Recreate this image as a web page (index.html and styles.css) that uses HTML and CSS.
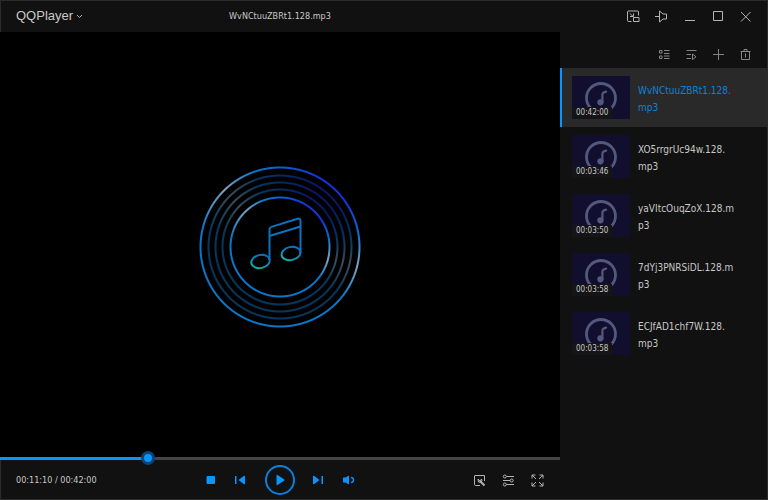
FILE: index.html
```
<!DOCTYPE html>
<html lang="en">
	<head>
		<meta charset="UTF-8">
		<title>QQPlayer</title>
		<link rel="stylesheet" href="styles.css">
	</head>
	<body>
		<!-- shared thumbnail drawing -->
		<svg class="defs" width="0" height="0">
			<symbol id="disc" viewBox="0 0 58 43">
				<circle cx="29" cy="22" r="14.5" fill="none" stroke="#53587f" stroke-width="2.8"/>
				<path d="M30.4 26V18.500q0-1.600 1.500-2.100l2.200-.8" fill="none" stroke="#53587f" stroke-width="2.2" stroke-linecap="round"/>
				<circle cx="28.4" cy="26.3" r="3.1" fill="#53587f"/>
			</symbol>
		</svg>
		<div class="player">
			<header class="titlebar">
				<button class="brand">QQPlayer
					<svg width="7" height="5" viewBox="0 0 7 5"><path d="M1 1l2.500 2.500L6 1"/></svg>
				</button>
				<h1 class="title">WvNCtuuZBRt1.128.mp3</h1>
				<div class="window-buttons">
					<button aria-label="Mini mode"><svg width="13" height="13" viewBox="0 0 13 13"><path d="M4.500 11.500H1.500q-1 0-1-1V2q0-1 1-1h9q1 0 1 1v3.500M3 3.500l3 3M6.500 3.500v3H3M6.500 7.500h5.500v4H6.500z"/></svg></button>
					<button aria-label="Pin"><svg width="13" height="13" viewBox="0 0 13 13"><path d="M0 6.500h4.500M4.500 1v11L8 9h3.500V4H8L4.500 1"/></svg></button>
					<button aria-label="Minimize"><svg width="13" height="13" viewBox="0 0 13 13"><path d="M2 10.500h10"/></svg></button>
					<button aria-label="Maximize"><svg width="13" height="13" viewBox="0 0 13 13"><path d="M2.500 1.500h9v9h-9z"/></svg></button>
					<button aria-label="Close"><svg width="13" height="13" viewBox="0 0 13 13"><path d="M2 2l9.500 9.500M11.500 2L2 11.500"/></svg></button>
				</div>
			</header>

			<main class="screen">
				<div class="stage">
					<div class="record">
						<div class="rings"></div>
						<svg class="note" width="160" height="160" viewBox="0 0 160 160">
							<defs>
								<linearGradient id="head" x1="0" y1="1" x2="1" y2="0">
									<stop offset="0.1" stop-color="#13b4a4"/>
									<stop offset="0.7" stop-color="#0b73c0"/>
								</linearGradient>
							</defs>
							<path d="M69.500 93V62.500q0-2 2-2.600l26-8.200q3-.9 3 2.300V86M69.500 69l31-9.500" stroke="#0b73c0"/>
							<ellipse cx="60.500" cy="94.500" rx="9.300" ry="6.500" transform="rotate(-12 60.500 94.500)" stroke="url(#head)"/>
							<ellipse cx="91" cy="86.500" rx="9.500" ry="6.500" transform="rotate(-12 91 86.500)" stroke="url(#head)"/>
						</svg>
					</div>
				</div>
				<input class="seek" type="range" min="0" max="2520" value="651" step="1" aria-label="Position">
				<div class="controls">
					<span class="time">00:11:10 / 00:42:00</span>
					<div class="transport">
						<button aria-label="Stop"><svg width="16" height="16" viewBox="0 0 16 16"><rect x="3.500" y="4" width="8.500" height="8" rx="1"/></svg></button>
						<button aria-label="Previous"><svg width="16" height="16" viewBox="0 0 16 16"><path d="M2 4h1.500v8H2zM12 4v8l-1 .3L5.500 8 11 3.700z"/></svg></button>
						<button class="play" aria-label="Play"><svg width="16" height="16" viewBox="0 0 16 16"><path d="M4.500 3.500q0-1 1-.5l6.500 4.300q1 .7 0 1.400L5.500 13q-1 .5-1-.5z"/></svg></button>
						<button aria-label="Next"><svg width="16" height="16" viewBox="0 0 16 16"><path d="M2 4v8l1 .3L8.500 8 3 3.700zM10.500 4H12v8h-1.500z"/></svg></button>
						<button aria-label="Volume"><svg width="16" height="16" viewBox="0 0 16 16"><path d="M2 6q0-.5.5-.5h2L8 3.500v9l-3.500-2h-2q-.5 0-.5-.5z"/><path d="M10 5.500q2.500.2 2.500 2.500t-2.500 2.500" fill="none" stroke="#0a94ff" stroke-width="1.5"/></svg></button>
					</div>
					<div class="tools">
						<button aria-label="Toolbox"><svg width="13" height="13" viewBox="0 0 13 13"><path d="M7 11.500H2.500q-1 0-1-1V2q0-.5.5-.5h9.500v5.500"/><path d="M7 7l4.500 4.500" stroke-width="2"/><path d="M5 5l2 2 1.500-2 .5 2-1.500 1.500L5.500 8z"/></svg></button>
						<button aria-label="Settings"><svg width="13" height="13" viewBox="0 0 13 13"><path d="M4.500 2.500H12M1 6.500h7M4.500 10.500H12"/><circle cx="2.800" cy="2.500" r="1.500"/><circle cx="9.700" cy="6.500" r="1.500"/><circle cx="2.800" cy="10.500" r="1.500"/></svg></button>
						<button aria-label="Full screen"><svg width="13" height="13" viewBox="0 0 13 13"><path d="M1 4.500V1h3.500M8.500 1H12v3.500M12 8.500V12H8.500M4.500 12H1V8.500M1 1l4 4M12 1L8 5M12 12L8 8M1 12l4-4"/></svg></button>
					</div>
				</div>
			</main>

			<aside class="sidebar">
				<div class="list-tools">
					<button aria-label="View"><svg width="11" height="11" viewBox="0 0 11 11"><path d="M.5 1.500h2.500v2.500H.5zM.5 7h2.500v2.500H.5zM5 1.500h5.500M5 4.500h5.500M5 7h5.500M5 9.500h5.500"/></svg></button>
					<button aria-label="Play order"><svg width="11" height="11" viewBox="0 0 11 11"><path d="M.5 1.500h10M.5 5.500h4.500M.5 9.500h4.500M6.500 5v5.500L10 7.800z"/></svg></button>
					<button aria-label="Add"><svg width="11" height="11" viewBox="0 0 11 11"><path d="M5.500 0v11M0 5.500h11"/></svg></button>
					<button aria-label="Delete"><svg width="11" height="11" viewBox="0 0 11 11"><path d="M.5 2.500h10M4 2.500v-2h3v2M1.500 2.500v8h8v-8M5.500 4.500v4"/></svg></button>
				</div>
				<ul class="playlist">
					<li class="item current">
						<div class="thumb"><svg><use href="#disc"/></svg><span>00:42:00</span></div>
						<p>WvNCtuuZBRt1.128.<br>mp3</p>
					</li>
					<li class="item">
						<div class="thumb"><svg><use href="#disc"/></svg><span>00:03:46</span></div>
						<p>XO5rrgrUc94w.128.<br>mp3</p>
					</li>
					<li class="item">
						<div class="thumb"><svg><use href="#disc"/></svg><span>00:03:50</span></div>
						<p>yaVItcOuqZoX.128.m<br>p3</p>
					</li>
					<li class="item">
						<div class="thumb"><svg><use href="#disc"/></svg><span>00:03:58</span></div>
						<p>7dYj3PNRSiDL.128.m<br>p3</p>
					</li>
					<li class="item">
						<div class="thumb"><svg><use href="#disc"/></svg><span>00:03:58</span></div>
						<p>ECJfAD1chf7W.128.<br>mp3</p>
					</li>
				</ul>
			</aside>
		</div>
	</body>
</html>
```
FILE: styles.css
```
*{margin: 0;padding: 0;box-sizing: border-box;}
body{
	background: #111;
	color: #c8c8c8;
	font: 9px/16px "DejaVu Sans Condensed", "Noto Sans", sans-serif;
}
button{
	display: flex;
	align-items: center;
	justify-content: center;
	border: 0;
	background: none;
	color: inherit;
	cursor: pointer;
}
ul{list-style: none;}
.defs{position: absolute;}
.player{
	display: grid;
	grid-template: 32px 1fr / 1fr 208px;
	min-height: 100vh;
	box-shadow: inset 0 0 0 1px #2b2b2b;
}

/* title bar */
.titlebar{
	grid-column: 1 / 3;
	display: grid;
	grid-template-columns: 88px 1fr 208px;
	align-items: center;
	padding-left: 16px;
}
.brand{
	justify-content: flex-start;
	gap: 3px;
	font: 13px/16px "Liberation Sans", Arial, sans-serif;
}
.title{
	padding-right: 104px;
	font-size: 9px;
	font-weight: normal;
	text-align: center;
}
.window-buttons{
	display: flex;
	justify-content: flex-end;
	gap: 15px;
	padding-right: 16px;
}
.titlebar svg,
.tools svg,
.list-tools svg{
	fill: none;
	stroke: #b4b4b4;
}

/* picture area */
.screen{
	display: flex;
	flex-direction: column;
}
.stage{
	flex: 1;
	display: flex;
	align-items: center;
	justify-content: center;
	padding-top: 4px;
	background: #000;
}
.record{
	display: grid;
	place-items: center;
}
.rings,
.note{grid-area: 1 / 1;}
.rings{
	width: 162px;
	height: 162px;
	background: conic-gradient(#0c5fd0, #1433dc 30deg, #1433dc 55deg, #0a6bd0 80deg, #7fa3bd 104deg, #0b76c8 128deg, #0b76c8 285deg, #7fa3bd 316deg, #0b76c8 340deg, #0c5fd0);
	--mask: radial-gradient(circle closest-side,
		transparent 48px, #000 49px, #000 50px, transparent 51px,
		transparent 56px, #0007 57px, #0007 58px, transparent 59px,
		transparent 63px, #0007 64px, #0007 65px, transparent 66px,
		transparent 70px, #0007 71px, #0007 72px, transparent 73px,
		transparent 78px, #000 79px, #000 80px, transparent 81px);
	-webkit-mask: var(--mask);
	mask: var(--mask);
}
.note{
	fill: none;
	stroke-width: 2;
}

/* seek bar */
.seek{
	-webkit-appearance: none;
	appearance: none;
	display: block;
	width: 100%;
	height: 14px;
	margin: -6px 0 -5px;
	overflow: hidden;
	background: linear-gradient(#0a94ff, #0a94ff) 0 6px / 26% 3px no-repeat,
		linear-gradient(#444, #444) 0 6px / 100% 3px no-repeat;
}
.seek::-webkit-slider-thumb{
	-webkit-appearance: none;
	width: 14px;
	height: 14px;
	border: 3px solid #064475;
	border-radius: 50%;
	background: #0a94ff;
}

/* bottom controls */
.controls{
	display: grid;
	grid-template-columns: 1fr auto 1fr;
	align-items: center;
	height: 40px;
	padding: 0 16px;
}
.transport,
.tools{
	display: flex;
	align-items: center;
}
.transport{
	gap: 14px;
	fill: #0a94ff;
}
.play{
	width: 30px;
	height: 30px;
	margin: 0 2px;
	border: 2px solid #0a80dc;
	border-radius: 50%;
}
.tools{
	justify-content: flex-end;
	gap: 16px;
}

/* playlist */
.sidebar{
	border-right: 1px solid #2b2b2b;
}
.list-tools{
	display: flex;
	align-items: center;
	justify-content: flex-end;
	gap: 16px;
	height: 36px;
	padding: 8px 16px 0 0;
}
.list-tools svg{stroke: #858585;}
.item{
	display: flex;
	gap: 8px;
	padding: 8px 24px 8px 10px;
	border-left: 2px solid transparent;
}
.current{
	border-color: #0a94ff;
	background: #292929;
	color: #0a83dc;
}
.thumb{
	flex: none;
	position: relative;
	width: 58px;
	height: 43px;
	background: #120e2d;
}
.thumb svg{
	display: block;
	width: 58px;
	height: 43px;
}
.thumb span{
	position: absolute;
	left: 0;
	bottom: 0;
	padding: 0 4px;
	background: #151518;
	color: #c8c8c8;
	font-size: 8px;
	line-height: 12px;
}
.item p{
	padding-top: 6px;
	font-size: 10px;
	line-height: 17px;
	word-break: break-all;
}
```
